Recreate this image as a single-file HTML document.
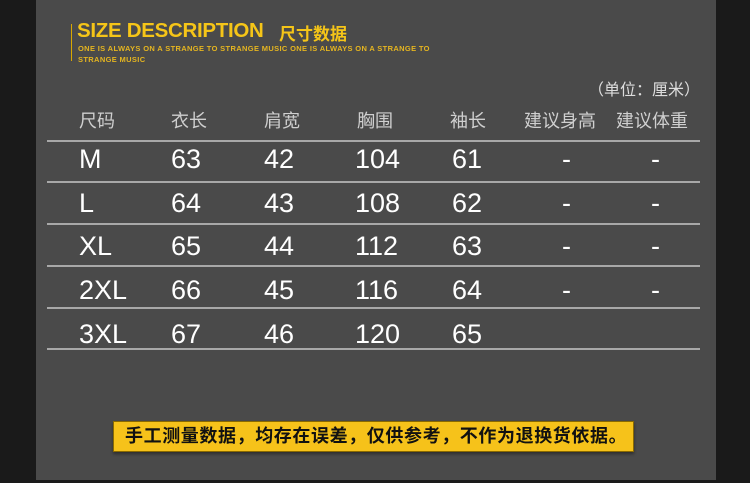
<!DOCTYPE html>
<html><head><meta charset="utf-8"><style>
*{margin:0;padding:0;box-sizing:border-box}
body{width:750px;height:483px;background:#1a1a1a;position:relative;overflow:hidden;font-family:"Liberation Sans","Noto Sans CJK SC",sans-serif}
.panel{position:absolute;left:36px;top:0;width:680px;height:480px;background:#4a4a4a}
.t{position:absolute;white-space:nowrap}
.bar{position:absolute;left:71px;top:24px;width:1px;height:37px;background:#d9a800}
.h{color:#cfcfcf;font-size:18px;top:107px}
.d{color:#fff;font-size:27px}
.line{position:absolute;left:47px;width:653px;height:2px;background:#a8a8a8}
.box{position:absolute;left:113px;top:421px;width:521px;height:31px;background:#f6c21a;border:1px solid #8a6a00;box-shadow:0 2px 3px rgba(0,0,0,.4);color:#111;font-weight:bold;font-size:18px;letter-spacing:0.6px;line-height:29px;padding-left:11px}
</style></head><body>
<div class="panel"></div>
<div class="bar"></div>
<div class="t" style="left:77px;top:19px;color:#f5c518;font-weight:bold;font-size:20.5px;letter-spacing:-0.3px">SIZE DESCRIPTION</div>
<div class="t" style="left:279px;top:20px;color:#f5c518;font-weight:bold;font-size:17px">尺寸数据</div>
<div class="t" style="left:78px;top:43px;color:#e5b520;font-size:7.5px;line-height:11px;letter-spacing:0.35px;font-weight:bold">ONE IS ALWAYS ON A STRANGE TO STRANGE MUSIC ONE IS ALWAYS ON A STRANGE TO<br>STRANGE MUSIC</div>
<div class="t" style="left:588px;top:76px;color:#ddd;font-size:16px">（单位：厘米）</div>
<div class="t h" style="left:79px">尺码</div>
<div class="t h" style="left:171px">衣长</div>
<div class="t h" style="left:264px">肩宽</div>
<div class="t h" style="left:357px">胸围</div>
<div class="t h" style="left:450px">袖长</div>
<div class="t h" style="left:524px">建议身高</div>
<div class="t h" style="left:616px">建议体重</div>
<div class="line" style="top:140px"></div>
<div class="line" style="top:181px"></div>
<div class="line" style="top:223px"></div>
<div class="line" style="top:265px"></div>
<div class="line" style="top:307px"></div>
<div class="line" style="top:348px"></div>

<div class="t d" style="left:79px;top:144px">M</div><div class="t d" style="left:171px;top:144px">63</div><div class="t d" style="left:264px;top:144px">42</div><div class="t d" style="left:355px;top:144px">104</div><div class="t d" style="left:452px;top:144px">61</div><div class="t d" style="left:562px;top:144px">-</div><div class="t d" style="left:651px;top:144px">-</div>
<div class="t d" style="left:79px;top:188px">L</div><div class="t d" style="left:171px;top:188px">64</div><div class="t d" style="left:264px;top:188px">43</div><div class="t d" style="left:355px;top:188px">108</div><div class="t d" style="left:452px;top:188px">62</div><div class="t d" style="left:562px;top:188px">-</div><div class="t d" style="left:651px;top:188px">-</div>
<div class="t d" style="left:79px;top:231px">XL</div><div class="t d" style="left:171px;top:231px">65</div><div class="t d" style="left:264px;top:231px">44</div><div class="t d" style="left:355px;top:231px">112</div><div class="t d" style="left:452px;top:231px">63</div><div class="t d" style="left:562px;top:231px">-</div><div class="t d" style="left:651px;top:231px">-</div>
<div class="t d" style="left:79px;top:275px">2XL</div><div class="t d" style="left:171px;top:275px">66</div><div class="t d" style="left:264px;top:275px">45</div><div class="t d" style="left:355px;top:275px">116</div><div class="t d" style="left:452px;top:275px">64</div><div class="t d" style="left:562px;top:275px">-</div><div class="t d" style="left:651px;top:275px">-</div>
<div class="t d" style="left:79px;top:319px">3XL</div><div class="t d" style="left:171px;top:319px">67</div><div class="t d" style="left:264px;top:319px">46</div><div class="t d" style="left:355px;top:319px">120</div><div class="t d" style="left:452px;top:319px">65</div>

<div class="box">手工测量数据，均存在误差，仅供参考，不作为退换货依据。</div>
</body></html>
